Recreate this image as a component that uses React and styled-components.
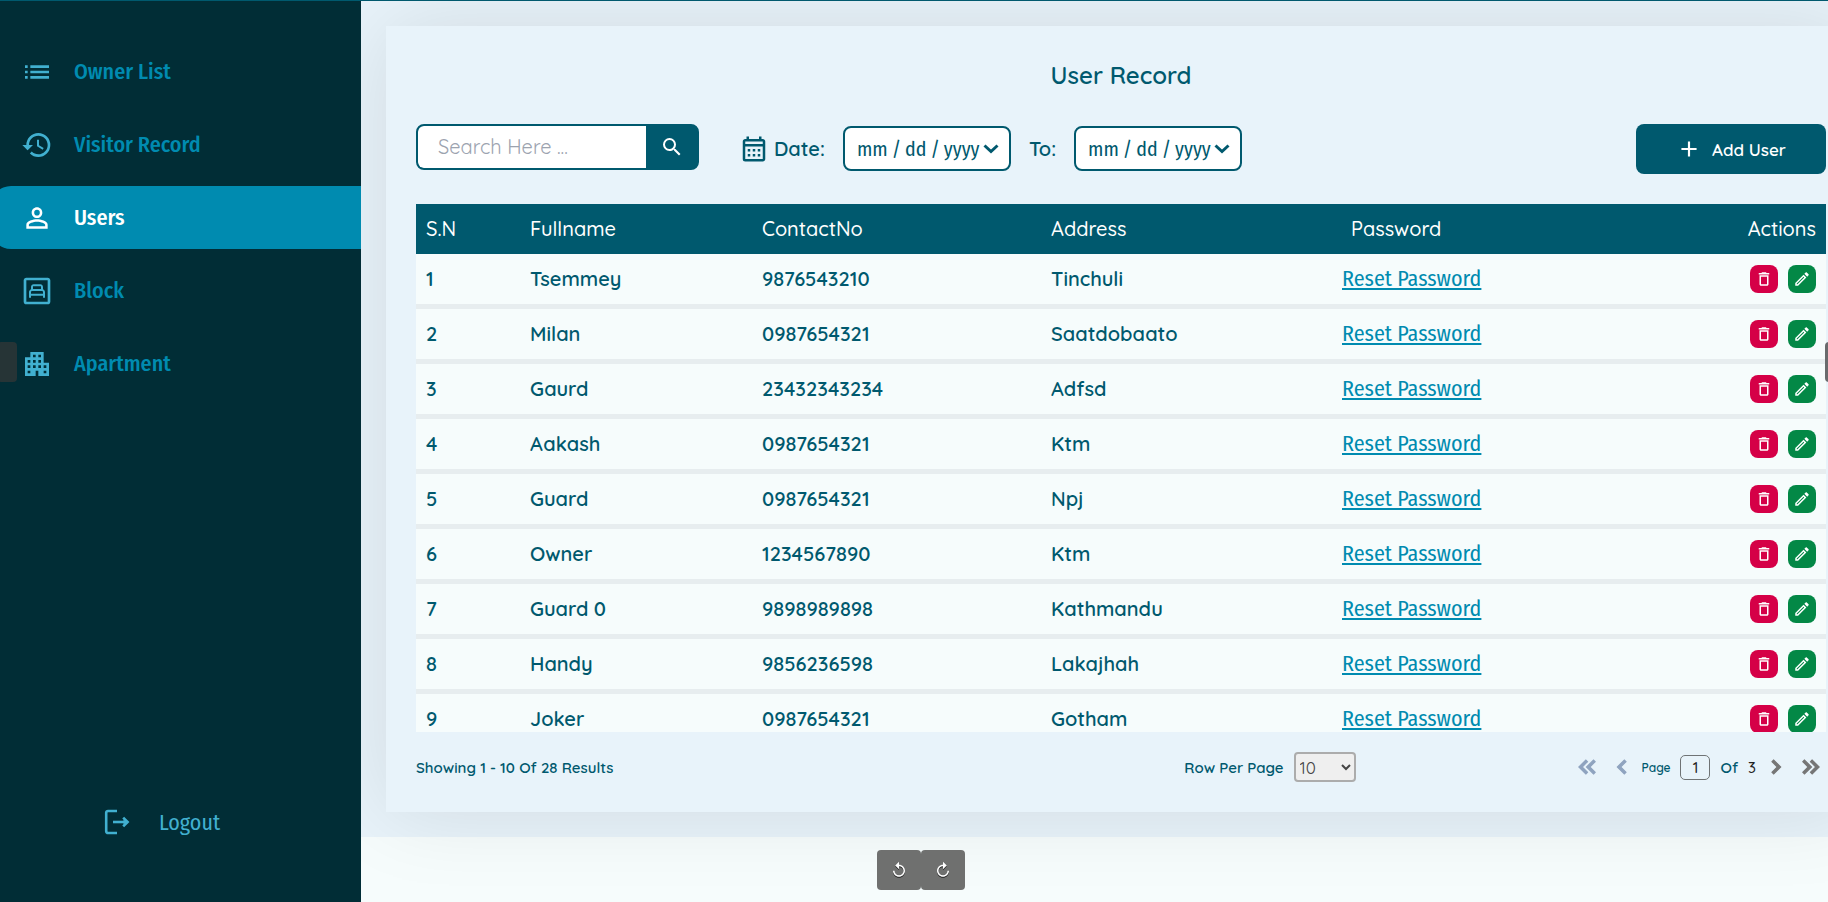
import React from 'react';
import styled, { createGlobalStyle, css } from 'styled-components';
import {
  MdList,
  MdHistory,
  MdPersonOutline,
  MdOutlineBedroomChild,
  MdApartment,
  MdOutlineCalendarMonth,
  MdDeleteOutline,
  MdOutlineEdit,
  MdSearch,
  MdAdd,
  MdReplay,
  MdChevronLeft,
  MdChevronRight,
  MdKeyboardDoubleArrowLeft,
  MdKeyboardDoubleArrowRight,
} from 'react-icons/md';

const color = {
  night: '#012d36',
  teal: '#00596e',
  blue: '#008bb0',
  sky: '#41b0d0',
  panel: '#e8f3fa',
  paper: '#f6fcfc',
  line: '#e7edef',
  red: '#d50047',
  green: '#038846',
};

const round = '"Quicksand", "Lato", sans-serif';
const narrow = '"Fira Sans Condensed", "Roboto", sans-serif';

const GlobalStyle = createGlobalStyle`
  *, *::before, *::after { box-sizing: border-box; }
  body {
    margin: 0;
    background: ${color.paper};
    color: ${color.teal};
    font-family: ${round};
    font-size: 20px;
  }
  button, input, select { font: inherit; color: inherit; margin: 0; }
  button { border: 0; padding: 0; background: none; cursor: pointer; }
`;

const Page = styled.div`
  display: flex;
  min-height: 100vh;
  overflow: hidden;
  border-top: 1px solid ${color.teal};
`;

const Sidebar = styled.aside`
  position: relative;
  z-index: 1;
  flex: 0 0 361px;
  display: flex;
  flex-direction: column;
  justify-content: space-between;
  padding: 39px 0 60px;
  background: ${color.night};
  font-family: ${narrow};
  font-size: 22px;
`;

const NavList = styled.ul`
  display: flex;
  flex-direction: column;
  gap: 10px;
  margin: 0;
  padding: 0;
  list-style: none;
`;

const NavLink = styled.a`
  display: flex;
  align-items: center;
  gap: 21px;
  height: 63px;
  margin-left: -9px;
  padding-left: 30px;
  border-radius: 20px 0 0 20px;
  font-weight: 500;
  text-decoration: none;
  color: ${color.blue};

  svg {
    width: 32px;
    height: 32px;
    color: ${color.sky};
  }

  ${(p) =>
    p.$active &&
    css`
      background: ${color.blue};
      &, svg { color: #fff; }
    `}
`;

const LogoutButton = styled.button`
  display: flex;
  align-items: center;
  align-self: flex-start;
  gap: 29px;
  height: 40px;
  padding-left: 104px;
  color: ${color.sky};
`;

const Main = styled.main`
  flex: 1;
  min-width: 0;
  align-self: flex-start;
  padding: 25px;
  background: ${color.panel};
`;

const Card = styled.section`
  margin-right: -53px;
  padding: 30px;
  background: ${color.panel};
  box-shadow: 0 0 80px rgba(0, 0, 0, 0.1);
`;

const Title = styled.h1`
  margin: 0 0 30px;
  font-size: 24px;
  font-weight: 600;
  line-height: 38px;
  text-align: center;
`;

const Toolbar = styled.div`
  display: flex;
  align-items: flex-start;
  margin-bottom: 30px;
`;

const SearchForm = styled.form`
  display: flex;
  width: 283px;
  height: 46px;
  border: 2px solid ${color.teal};
  border-radius: 8px;
  background: ${color.teal};
  overflow: hidden;
`;

const SearchInput = styled.input`
  flex: 1;
  min-width: 0;
  padding: 0 20px 2px;
  border: 0;
  border-radius: 5px 0 0 5px;
  outline: 0;
  background: #fff;

  &::placeholder { color: #9ca3af; opacity: 1; }
`;

const SearchButton = styled.button`
  display: grid;
  place-items: center;
  width: 51px;
  color: #fff;

  svg { width: 24px; height: 24px; }
`;

const DateRange = styled.div`
  display: flex;
  align-items: center;
  gap: 18px;
  height: 49px;
  margin-left: 40px;
`;

const DateLabel = styled.label`
  display: flex;
  align-items: center;
  gap: 5px;
  font-weight: 600;

  svg { width: 30px; height: 30px; }
`;

const DateField = styled.span`
  position: relative;
  display: block;
`;

const DateInput = styled.input`
  display: block;
  width: 168px;
  height: 45px;
  padding: 0 11px;
  border: 2px solid ${color.teal};
  border-radius: 8px;
  background: #fff;
  font-family: ${narrow};
  font-size: 20px;

  &::-webkit-datetime-edit-text { padding: 0 3px; }
  &::-webkit-calendar-picker-indicator { width: 16px; margin: 0; padding: 0; opacity: 0; }
`;

const DateArrow = styled.svg`
  position: absolute;
  right: 12px;
  top: 18px;
  width: 16px;
  height: 10px;
  pointer-events: none;
`;

const AddButton = styled.button`
  display: flex;
  align-items: center;
  justify-content: center;
  gap: 10px;
  width: 190px;
  height: 50px;
  margin-left: auto;
  border-radius: 8px;
  background: ${color.teal};
  color: #fff;
  font-size: 17px;
  font-weight: 600;

  svg { width: 26px; height: 26px; }
`;

const TableScroll = styled.div`
  height: 528px;
  overflow: hidden;
`;

const Table = styled.table`
  width: 100%;
  table-layout: fixed;
  border-collapse: separate;
  border-spacing: 0;
`;

const HeadCell = styled.th`
  width: ${(p) => p.$width || 'auto'};
  height: 50px;
  padding: 0 10px 2px ${(p) => (p.$inset ? '19px' : '10px')};
  background: ${color.teal};
  color: #fff;
  font-weight: 500;
  text-align: ${(p) => (p.$end ? 'right' : 'left')};
`;

const Cell = styled.td`
  height: 55px;
  padding: 0 10px 2px;
  border-bottom: 5px solid ${color.line};
  background: ${color.paper};
  font-weight: 600;
`;

const ActionsCell = styled(Cell)`
  padding-bottom: 0;
`;

const ResetLink = styled.a`
  color: ${color.blue};
  font-family: ${narrow};
  font-size: 22px;
  font-weight: 400;
  text-underline-offset: 2px;
`;

const Actions = styled.div`
  display: flex;
  justify-content: flex-end;
  gap: 10px;
`;

const ActionButton = styled.button`
  display: grid;
  place-items: center;
  width: 28px;
  height: 28px;
  border-radius: 8px;
  background: ${(p) => (p.$danger ? color.red : color.green)};
  color: #fff;

  svg { width: 18px; height: 18px; }
`;

const Footer = styled.footer`
  display: grid;
  grid-template-columns: 1fr auto auto;
  align-items: center;
  column-gap: 216px;
  margin-top: 20px;
  font-size: 15px;
  font-weight: 600;
`;

const PageSize = styled.label`
  display: flex;
  align-items: center;
  gap: 10px;
`;

const PageSizeSelect = styled.select`
  width: 62px;
  height: 30px;
  border: 2px solid #acacac;
  border-radius: 4px;
  background: #efefef;
  color: #444;
  font-size: 17px;
  font-weight: 400;
`;

const Pager = styled.nav`
  display: flex;
  align-items: center;
`;

const PagerButton = styled.button`
  display: grid;
  place-items: center;
  width: 30px;
  height: 30px;
  margin-right: ${(p) => (p.$last ? '0' : '5px')};
  color: #767676;

  &:disabled { color: #8fa3bf; }

  svg {
    width: 28px;
    height: 28px;
    stroke: none;
  }

  path:not([fill='none']) {
    stroke: currentColor;
    stroke-width: 1;
  }
`;

const PageField = styled.label`
  display: flex;
  align-items: center;
  gap: 10px;
  margin-right: 10px;
  font-size: 12px;
`;

const PageInput = styled.input`
  width: 30px;
  height: 25px;
  padding: 0;
  border: 1px solid #6f7375;
  border-radius: 5px;
  background: transparent;
  color: #222;
  font-size: 15px;
  font-weight: 500;
  text-align: center;
`;

const PageCount = styled.span`
  margin: 0 5px 0 10px;
  color: #222;
  font-weight: 500;
`;

const EdgeHandle = styled.button`
  position: fixed;
  z-index: 2;
  top: 342px;
  ${(p) => (p.$side === 'left' ? 'left: -3px;' : 'right: -17px;')}
  width: 20px;
  height: 40px;
  border-radius: 4px;
  background: ${(p) => (p.$side === 'left' ? '#263436' : '#696b6d')};
`;

const RotateBar = styled.div`
  position: fixed;
  z-index: 2;
  left: 0;
  right: 0;
  bottom: 12px;
  display: flex;
  justify-content: center;
  padding-left: 14px;
`;

const RotateButton = styled.button`
  display: grid;
  place-items: center;
  width: 44px;
  height: 40px;
  border-radius: 4px;
  background: #6f706f;
  color: #fff;

  svg {
    width: 18px;
    height: 18px;
    filter: drop-shadow(0 1px 0 #222);
    transform: ${(p) => (p.$clockwise ? 'scaleX(-1)' : 'none')};
  }
`;

const LogoutIcon = () => (
  <svg width="26" height="26" viewBox="0 0 26 26" fill="none" stroke="currentColor" strokeWidth="2.6" aria-hidden="true">
    <path d="M13 2H4a1.8 1.8 0 0 0-1.8 1.8v18.4A1.8 1.8 0 0 0 4 24h9" />
    <path d="M9 13h14" />
    <path d="M19.2 8.6 23.6 13l-4.4 4.4" />
    <path d="M19.5 10.5v5l3-2.5z" fill="currentColor" stroke="none" />
  </svg>
);

const navItems = [
  { label: 'Owner List', Icon: MdList },
  { label: 'Visitor Record', Icon: MdHistory },
  { label: 'Users', Icon: MdPersonOutline, active: true },
  { label: 'Block', Icon: MdOutlineBedroomChild },
  { label: 'Apartment', Icon: MdApartment },
];

const users = [
  ['Tsemmey', '9876543210', 'Tinchuli'],
  ['Milan', '0987654321', 'Saatdobaato'],
  ['Gaurd', '23432343234', 'Adfsd'],
  ['Aakash', '0987654321', 'Ktm'],
  ['Guard', '0987654321', 'Npj'],
  ['Owner', '1234567890', 'Ktm'],
  ['Guard 0', '9898989898', 'Kathmandu'],
  ['Handy', '9856236598', 'Lakajhah'],
  ['Joker', '0987654321', 'Gotham'],
];

function DatePicker({ id }) {
  return (
    <DateField>
      <DateInput type="date" id={id} />
      <DateArrow viewBox="0 0 16 10" fill="none" stroke={color.teal} strokeWidth="3" aria-hidden="true">
        <path d="M1.5 1.5 8 7.5l6.5-6" />
      </DateArrow>
    </DateField>
  );
}

export default function App() {
  return (
    <>
      <GlobalStyle />
      <Page>
        <Sidebar>
          <nav>
            <NavList>
              {navItems.map(({ label, Icon, active }) => (
                <li key={label}>
                  <NavLink href="#" $active={active} aria-current={active ? 'page' : undefined}>
                    <Icon />
                    {label}
                  </NavLink>
                </li>
              ))}
            </NavList>
          </nav>
          <LogoutButton type="button">
            <LogoutIcon />
            Logout
          </LogoutButton>
        </Sidebar>

        <Main>
          <Card>
            <Title>User Record</Title>
            <Toolbar>
              <SearchForm role="search">
                <SearchInput type="text" placeholder="Search Here ..." aria-label="Search users" />
                <SearchButton type="button" aria-label="Search">
                  <MdSearch />
                </SearchButton>
              </SearchForm>
              <DateRange>
                <DateLabel htmlFor="date-from">
                  <MdOutlineCalendarMonth />
                  Date:
                </DateLabel>
                <DatePicker id="date-from" />
                <DateLabel htmlFor="date-to">To:</DateLabel>
                <DatePicker id="date-to" />
              </DateRange>
              <AddButton type="button">
                <MdAdd />
                Add User
              </AddButton>
            </Toolbar>

            <TableScroll>
              <Table>
                <thead>
                  <tr>
                    <HeadCell $width="104px">S.N</HeadCell>
                    <HeadCell $width="232px">Fullname</HeadCell>
                    <HeadCell $width="289px">ContactNo</HeadCell>
                    <HeadCell $width="291px">Address</HeadCell>
                    <HeadCell $width="240px" $inset>Password</HeadCell>
                    <HeadCell $end>Actions</HeadCell>
                  </tr>
                </thead>
                <tbody>
                  {users.map(([name, contact, address], i) => (
                    <tr key={name}>
                      <Cell>{i + 1}</Cell>
                      <Cell>{name}</Cell>
                      <Cell>{contact}</Cell>
                      <Cell>{address}</Cell>
                      <Cell>
                        <ResetLink href="#">Reset Password</ResetLink>
                      </Cell>
                      <ActionsCell>
                        <Actions>
                          <ActionButton type="button" $danger aria-label={`Delete ${name}`}>
                            <MdDeleteOutline />
                          </ActionButton>
                          <ActionButton type="button" aria-label={`Edit ${name}`}>
                            <MdOutlineEdit />
                          </ActionButton>
                        </Actions>
                      </ActionsCell>
                    </tr>
                  ))}
                </tbody>
              </Table>
            </TableScroll>

            <Footer>
              <span>Showing 1 - 10 Of 28 Results</span>
              <PageSize>
                Row Per Page
                <PageSizeSelect defaultValue="10">
                  <option>10</option>
                  <option>20</option>
                  <option>50</option>
                </PageSizeSelect>
              </PageSize>
              <Pager aria-label="Pagination">
                <PagerButton type="button" disabled aria-label="First page">
                  <MdKeyboardDoubleArrowLeft />
                </PagerButton>
                <PagerButton type="button" disabled aria-label="Previous page">
                  <MdChevronLeft />
                </PagerButton>
                <PageField>
                  Page
                  <PageInput type="text" defaultValue="1" />
                </PageField>
                Of
                <PageCount>3</PageCount>
                <PagerButton type="button" aria-label="Next page">
                  <MdChevronRight />
                </PagerButton>
                <PagerButton type="button" $last aria-label="Last page">
                  <MdKeyboardDoubleArrowRight />
                </PagerButton>
              </Pager>
            </Footer>
          </Card>
        </Main>
      </Page>

      <EdgeHandle type="button" $side="left" aria-label="Previous" />
      <EdgeHandle type="button" $side="right" aria-label="Next" />
      <RotateBar>
        <RotateButton type="button" aria-label="Rotate left">
          <MdReplay />
        </RotateButton>
        <RotateButton type="button" $clockwise aria-label="Rotate right">
          <MdReplay />
        </RotateButton>
      </RotateBar>
    </>
  );
}
